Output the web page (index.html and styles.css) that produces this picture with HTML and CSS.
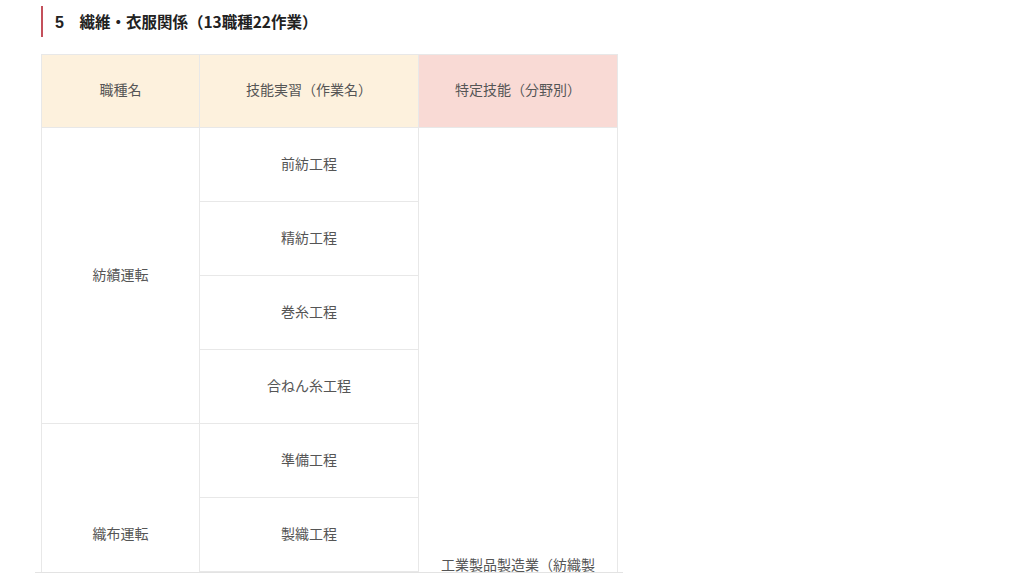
FILE: index.html
```html
<!DOCTYPE html>
<html lang="ja">
<head>
<meta charset="utf-8">
<title>繊維・衣服関係</title>
<link rel="stylesheet" href="styles.css">
</head>
<body>
<main class="page">
  <h2 class="section-title"><span class="num">5</span>　繊維・衣服関係（13職種22作業）</h2>
  <div class="table-clip">
    <table class="job-table">
      <colgroup>
        <col class="col-job">
        <col class="col-work">
        <col class="col-skill">
      </colgroup>
      <thead>
        <tr>
          <th>職種名</th>
          <th>技能実習（作業名）</th>
          <th class="head-skill">特定技能（分野別）</th>
        </tr>
      </thead>
      <tbody>
        <tr>
          <td rowspan="4">紡績運転</td>
          <td>前紡工程</td>
          <td rowspan="12" class="skill-cell">工業製品製造業（紡織製品製造区分）</td>
        </tr>
        <tr><td>精紡工程</td></tr>
        <tr><td>巻糸工程</td></tr>
        <tr><td>合ねん糸工程</td></tr>
        <tr>
          <td rowspan="3">織布運転</td>
          <td>準備工程</td>
        </tr>
        <tr><td>製織工程</td></tr>
        <tr><td>仕上工程</td></tr>
        <tr>
          <td rowspan="2">染色</td>
          <td>糸浸染</td>
        </tr>
        <tr><td>織物・ニット浸染</td></tr>
        <tr>
          <td rowspan="2">ニット製品製造</td>
          <td>靴下製造</td>
        </tr>
        <tr><td>丸編みニット製造</td></tr>
        <tr>
          <td>たて編ニット生地製造</td>
          <td>たて編ニット生地製造</td>
        </tr>
      </tbody>
    </table>
  </div>
</main>
</body>
</html>
```

FILE: styles.css
```css
html, body {
  margin: 0;
  padding: 0;
  background: #ffffff;
}

body {
  font-family: "Noto Sans CJK JP", "Noto Sans", sans-serif;
  color: #555555;
}

.page {
  padding: 6px 0 0 41px;
}

.section-title {
  margin: 0;
  border-left: 2px solid #c4505b;
  padding-left: 12px;
  height: 31px;
  line-height: 30px;
  font-size: 15.5px;
  font-weight: bold;
  color: #222222;
}

.section-title .num {
  font-family: "Liberation Sans", Arial, sans-serif;
  font-size: 16px;
}

.table-clip {
  margin: 17px 0 0 -6px;
  padding-left: 6px;
  width: 582px;
  height: 518px;
  overflow: hidden;
  border-bottom: 1px solid #e3e3e3;
}

.job-table {
  border-collapse: collapse;
  width: 576px;
  table-layout: fixed;
  font-size: 14px;
  color: #555555;
}

.col-job { width: 158px; }
.col-work { width: 219px; }
.col-skill { width: 199px; }

.job-table th,
.job-table td {
  border: 1px solid #e8e8e8;
  text-align: center;
  vertical-align: middle;
  padding: 0 20px 4px;
  font-weight: normal;
  line-height: 22px;
}

.job-table th {
  height: 68px;
  background: #fdf1dd;
}

.job-table th.head-skill {
  background: #f9dad5;
}

.job-table td {
  height: 69px;
}

.job-table td.skill-cell {
  padding: 6px 20px 0;
}
```
